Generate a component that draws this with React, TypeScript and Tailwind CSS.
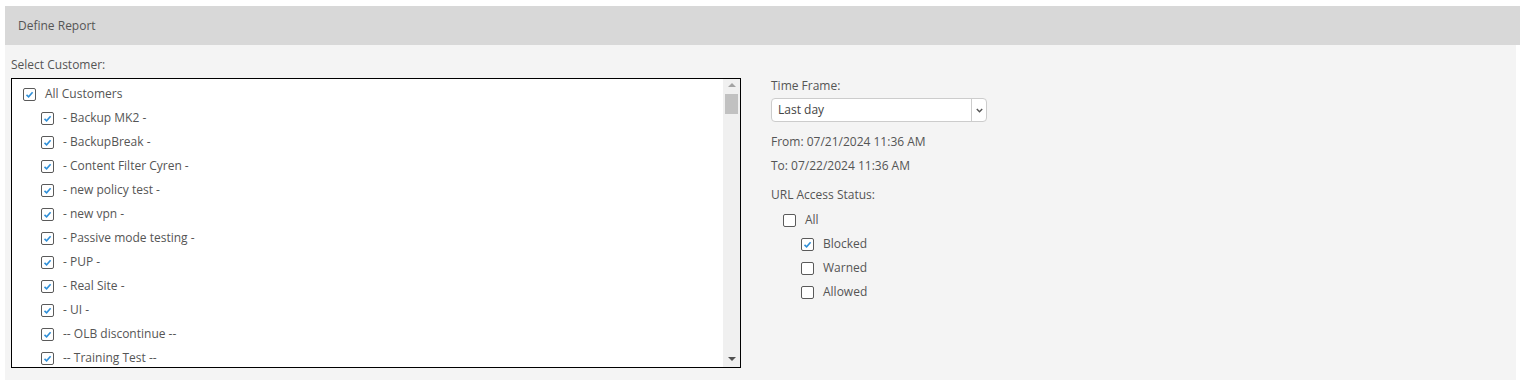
const customers = [
  "- Backup MK2 -",
  "- BackupBreak -",
  "- Content Filter Cyren -",
  "- new policy test -",
  "- new vpn -",
  "- Passive mode testing -",
  "- PUP -",
  "- Real Site -",
  "- UI -",
  "-- OLB discontinue --",
  "-- Training Test --",
];

function Box({ checked }: { checked: boolean }) {
  return (
    <span className="flex h-[13px] w-[13px] shrink-0 items-center justify-center rounded-[2px] border border-[#5a5a5a] bg-white">
      {checked && (
        <svg width="9" height="9" viewBox="0 0 9 9">
          <path d="M1.5 4.8 L3.6 6.8 L7.6 2.2" fill="none" stroke="#2f8fd8" strokeWidth="1.6" />
        </svg>
      )}
    </span>
  );
}

function Row({ label, checked, indent }: { label: string; checked: boolean; indent?: boolean }) {
  return (
    <div className={`flex h-[24px] shrink-0 items-center gap-[9px] ${indent ? "pl-[18px]" : ""}`}>
      <Box checked={checked} />
      <span className="whitespace-nowrap">{label}</span>
    </div>
  );
}

export default function App() {
  return (
    <div className="h-[387px] w-[1524px] bg-white px-[5px] pt-[6px] font-['Open_Sans',sans-serif] text-[12px] leading-[16px] text-[#555]">
      <div className="flex h-[39px] w-[1515px] items-center bg-[#d8d8d8] pl-[13px] text-[#555]">
        Define Report
      </div>
      <div className="flex h-[335px] w-[1511px] bg-[#f4f4f4] px-[6px]">
        <div className="flex flex-col pt-[12px]">
          <div>Select Customer:</div>
          <div className="mt-[5px] flex h-[290px] w-[730px] border border-black bg-white">
            <div className="flex flex-1 flex-col overflow-hidden pl-[11px] pt-[3px]">
              <Row label="All Customers" checked />
              {customers.map((c) => (
                <Row key={c} label={c} checked indent />
              ))}
            </div>
            <div className="flex w-[17px] flex-col items-center bg-[#f0f0f0]">
              <div className="mt-[4px] h-0 w-0 border-x-[4px] border-b-[4px] border-x-transparent border-b-[#a3a3a3]" />
              <div className="mt-[7px] h-[20px] w-[13px] bg-[#c1c1c1]" />
              <div className="flex-1" />
              <div className="mb-[6px] h-0 w-0 border-x-[4px] border-t-[4px] border-x-transparent border-t-[#505050]" />
            </div>
          </div>
        </div>
        <div className="ml-[30px] flex flex-col pt-[33px]">
          <div>Time Frame:</div>
          <div className="mt-[4px] flex h-[24px] w-[216px] items-center rounded-[4px] border border-[#cccccc] bg-white">
            <span className="flex-1 pl-[6px] text-[#444]">Last day</span>
            <span className="flex h-full w-[15px] items-center justify-center border-l border-[#cccccc]">
              <svg width="7" height="5" viewBox="0 0 7 5">
                <path d="M0.8 1 L3.5 3.8 L6.2 1" fill="none" stroke="#555" strokeWidth="1.4" />
              </svg>
            </span>
          </div>
          <div className="mt-[12px]">From: 07/21/2024 11:36 AM</div>
          <div className="mt-[8px]">To: 07/22/2024 11:36 AM</div>
          <div className="mt-[13px]">URL Access Status:</div>
          <div className="mt-[5px] flex flex-col pl-[12px]">
            <Row label="All" checked={false} />
            <Row label="Blocked" checked indent />
            <Row label="Warned" checked={false} indent />
            <Row label="Allowed" checked={false} indent />
          </div>
        </div>
      </div>
    </div>
  );
}
